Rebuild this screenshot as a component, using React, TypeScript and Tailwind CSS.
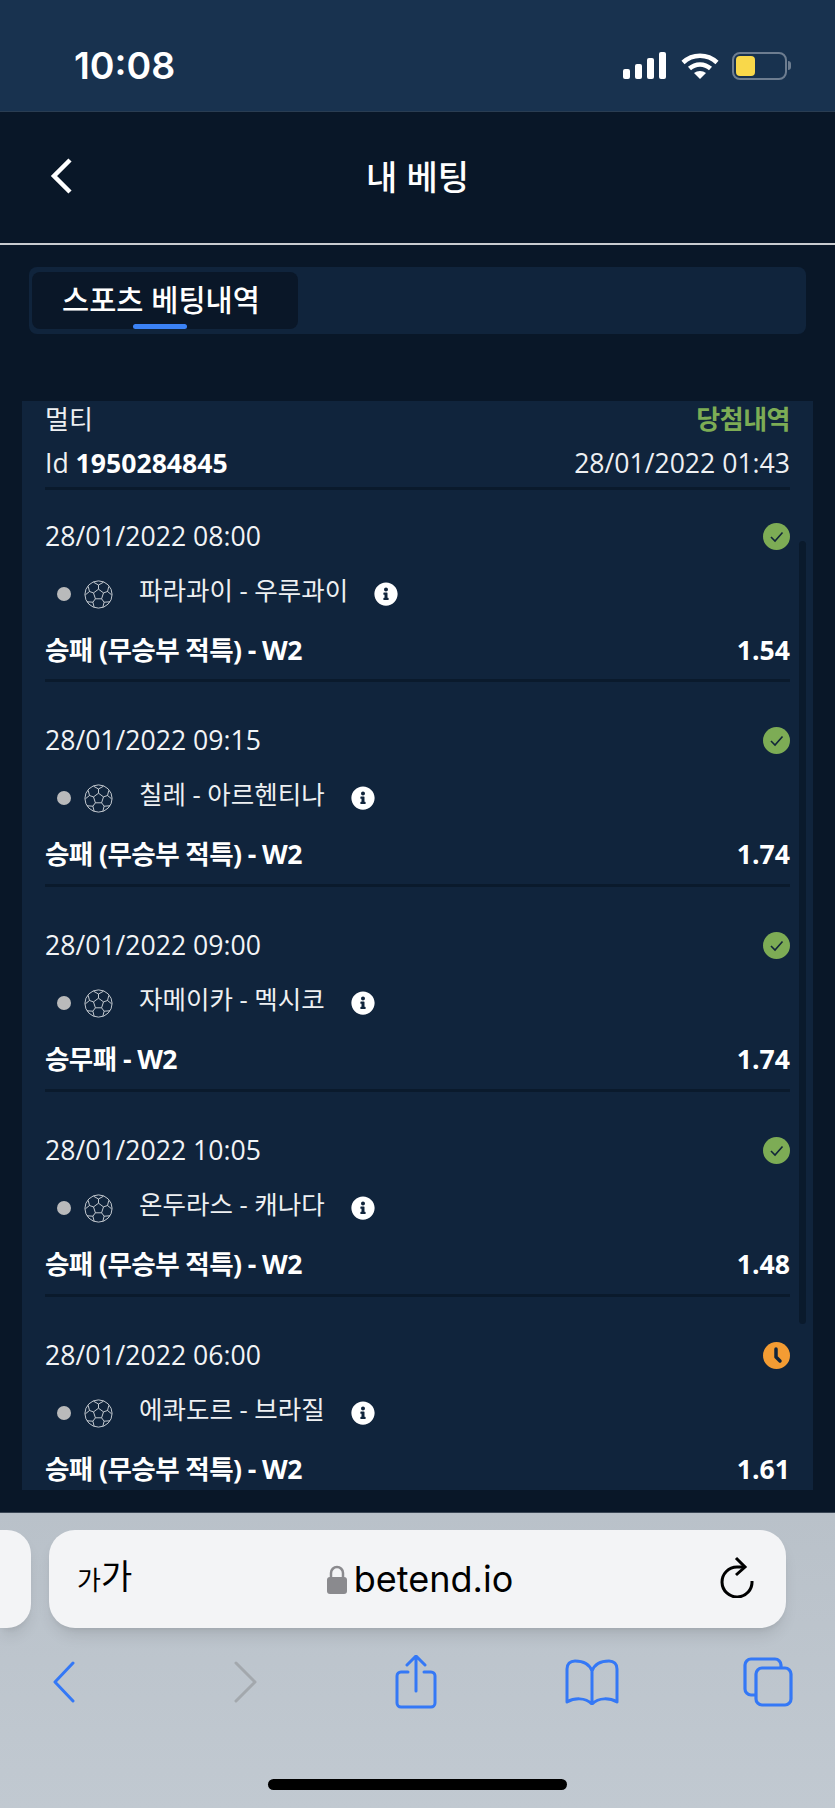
import { FC } from "react";
import { FaInfoCircle } from "react-icons/fa";

interface Bet {
  date: string;
  teams: string;
  market: string;
  odds: string;
  pending?: boolean;
}

const bets: Bet[] = [
  { date: "28/01/2022 08:00", teams: "파라과이 - 우루과이", market: "승패 (무승부 적특) - W2", odds: "1.54" },
  { date: "28/01/2022 09:15", teams: "칠레 - 아르헨티나", market: "승패 (무승부 적특) - W2", odds: "1.74" },
  { date: "28/01/2022 09:00", teams: "자메이카 - 멕시코", market: "승무패 - W2", odds: "1.74" },
  { date: "28/01/2022 10:05", teams: "온두라스 - 캐나다", market: "승패 (무승부 적특) - W2", odds: "1.48" },
  { date: "28/01/2022 06:00", teams: "에콰도르 - 브라질", market: "승패 (무승부 적특) - W2", odds: "1.61", pending: true },
];

const sans = "font-['Open_Sans','Noto_Sans_CJK_KR',sans-serif]";
const ios = "font-['Inter','Noto_Sans_CJK_KR',sans-serif]";

const StatusIcons: FC = () => (
  <div className="flex items-center">
    <svg width="44" height="28" viewBox="0 0 44 28" fill="#fff">
      <rect x="0" y="17" width="7" height="10" rx="2" />
      <rect x="12" y="12" width="7" height="15" rx="2" />
      <rect x="24" y="6" width="7" height="21" rx="2" />
      <rect x="36" y="0" width="7" height="27" rx="2" />
    </svg>
    <svg className="ml-[14px]" width="38" height="28" viewBox="0 0 38 28" fill="none" stroke="#fff" strokeWidth="4.5">
      <path d="M2 10.5C11.5 1.5 26.5 1.5 36 10.5" />
      <path d="M8.5 16.5C14.5 11 23.5 11 29.5 16.5" />
      <path d="M19 27l-6-6c3.4-2.8 8.6-2.8 12 0z" fill="#fff" stroke="none" />
    </svg>
    <div className="ml-[13px] flex items-center">
      <div className="w-[55px] h-[28px] rounded-[8px] border-2 border-[#6d7d90] p-[2px]">
        <div className="w-[19px] h-full rounded-[4px] bg-[#f9d84a]" />
      </div>
      <div className="w-[3px] h-[9px] ml-[1px] rounded-r-full bg-[#6d7d90]" />
    </div>
  </div>
);

// soccer ball outline: centre pentagon, spokes and rim patches
const Ball: FC = () => (
  <svg className="ml-[13px] shrink-0" width="29" height="29" viewBox="0 0 29 29" fill="none" stroke="#d5d9de" strokeWidth="0.9" strokeLinejoin="round">
    <circle cx="14.5" cy="14.5" r="13.6" />
    <path d="M14.5 9.2l5 3.7-1.9 5.9h-6.2l-1.9-5.9z" />
    <path d="M14.5 9.2V5M19.5 12.9l4-1.4M17.6 18.8l2.5 3.4M11.4 18.8l-2.5 3.4M9.5 12.9l-4-1.4" />
    <path d="M9.5 2.2l5 2.8 5-2.8M23.5 11.5l1.3-5M23.5 11.5l4.2 3.4M20.1 22.2l6-0.4M20.1 22.2l-1.2 5M8.9 22.2l1.2 5M8.9 22.2l-6-0.4M5.5 11.5l-4.2 3.4M5.5 11.5L4.2 6.5" />
  </svg>
);

const BetRow: FC<{ bet: Bet; index: number }> = ({ bet, index }) => (
  <div className={`${index === 0 ? "h-[192px] pt-[28px]" : "h-[205px] pt-[40px]"} ${index === bets.length - 1 ? "" : "border-b-[3px] border-[#0a1a2c]"}`}>
    <div className="flex items-center justify-between h-[36px]">
      <span className="text-[26.6px] leading-[36px] text-[#f2f4f6]">{bet.date}</span>
      {bet.pending ? (
        <svg width="27" height="27" viewBox="0 0 27 27">
          <circle cx="13.5" cy="13.5" r="13.5" fill="#f39c33" />
          <path d="M13 7v8l4 4" fill="none" stroke="#10243c" strokeWidth="3.5" strokeLinecap="round" strokeLinejoin="round" />
        </svg>
      ) : (
        <svg width="27" height="27" viewBox="0 0 27 27">
          <circle cx="13.5" cy="13.5" r="13.5" fill="#7dac55" />
          <path d="M8 14l4 4 7.5-8.5" fill="none" stroke="#12263a" strokeWidth="1.6" />
        </svg>
      )}
    </div>
    <div className="flex items-center h-[40px] mt-[20px] pl-[12px]">
      <span className="w-[14px] h-[14px] rounded-full bg-[#b9babb]" />
      <Ball />
      <span className="ml-[26px] text-[25.5px] leading-[36px] -mt-[8px] text-[#eef0f2]">{bet.teams}</span>
      <FaInfoCircle className="ml-[26px] text-white" size={24} />
    </div>
    <div className="flex items-center justify-between h-[36px] mt-[18px] text-[26.6px] leading-[36px] font-bold text-white">
      <span className="tracking-[-0.6px]">{bet.market}</span>
      <span>{bet.odds}</span>
    </div>
  </div>
);

const App: FC = () => {
  return (
    <div className={`relative w-[835px] h-[1808px] flex flex-col overflow-hidden bg-[#091728] ${sans}`}>
      {/* iOS status bar */}
      <div className={`h-[112px] shrink-0 flex items-center justify-between pt-[20px] pl-[74px] pr-[44px] bg-[#18324f] border-b border-[#2a3d52] ${ios}`}>
        <span className="text-[37.5px] font-semibold text-white leading-none">10:08</span>
        <StatusIcons />
      </div>

      {/* page header */}
      <div className="relative h-[133px] shrink-0 flex items-center justify-center border-b-[2px] border-[#c9ccd0]">
        <svg className="absolute left-[50px] top-[46px]" width="22" height="36" viewBox="0 0 22 36" fill="none" stroke="#fff" strokeWidth="4.5">
          <path d="M20 2L4 18l16 16" />
        </svg>
        <h1 className={`text-[34px] font-medium text-white ${ios}`}>내 베팅</h1>
      </div>

      {/* tabs */}
      <div className="mx-[29px] mt-[22px] h-[67px] shrink-0 rounded-[8px] bg-[#10243c] pl-[3px] pt-[5px]">
        <div className="relative w-[266px] h-[57px] rounded-[8px] bg-[#0a1728] flex items-center pl-[30px]">
          <span className={`text-[29.5px] font-medium text-white ${ios}`}>스포츠 베팅내역</span>
          <span className="absolute bottom-0 left-[101px] w-[54px] h-[5px] rounded-full bg-[#3b82f6]" />
        </div>
      </div>

      {/* bet slip */}
      <div className="relative mx-[22px] mt-[67px] h-[1089px] shrink-0 bg-[#10243c] overflow-hidden px-[23px]">
        <div className="flex items-center justify-between h-[44px] text-[26px] leading-[36px] -mt-[4px]">
          <span className="text-[#eef0f2]">멀티</span>
          <span className="font-semibold tracking-[-0.5px] text-[#7dac55]">당첨내역</span>
        </div>
        <div className="flex items-center justify-between mt-[2px] h-[47px] border-b-[3px] border-[#0a1a2c] pb-[3px] text-[26.6px] text-[#eef0f2]">
          <span>
            Id <b className="font-bold text-white">1950284845</b>
          </span>
          <span>28/01/2022 01:43</span>
        </div>
        {bets.map((bet, i) => (
          <BetRow key={bet.date} bet={bet} index={i} />
        ))}
        <div className="absolute left-[777px] top-[140px] w-[7px] h-[783px] rounded-full bg-[#0a1a2c]" />
      </div>

      {/* Safari toolbar */}
      <div className={`absolute left-0 right-0 bottom-0 h-[296px] border-t border-[#3a4655] bg-gradient-to-b from-[#b9c1c9] to-[#c1c9d1] ${ios}`}>
        <div className="flex mt-[17px] h-[98px]">
          <div className="w-[31px] rounded-r-[24px] bg-[#f3f4f6] shadow-lg" />
          <div className="relative flex-1 ml-[18px] mr-[49px] rounded-[26px] bg-[#f3f4f6] shadow-lg flex items-center justify-center text-black">
            <span className="absolute left-[28px] top-[30px] flex items-end leading-none">
              <span className="text-[26px] leading-none">가</span>
              <span className="text-[34px] leading-none">가</span>
            </span>
            <svg className="ml-[5px] mr-[7px]" width="20" height="29" viewBox="0 0 20 29">
              <path d="M4 13V8a6 6 0 0112 0v5" fill="none" stroke="#8a8a8e" strokeWidth="2.5" />
              <rect x="0" y="12" width="20" height="17" rx="3" fill="#8a8a8e" />
            </svg>
            <span className="text-[36px] leading-none">betend.io</span>
            <svg className="absolute right-[30px] top-[26px]" width="36" height="42" viewBox="0 0 36 42" fill="none" stroke="#000" strokeWidth="3">
              <path d="M25 11H17A15 15 0 1 0 32 25" />
              <path d="M16 2l9 9-9 8" />
            </svg>
          </div>
        </div>
        <div className="flex items-center justify-between pl-[53px] pr-[42px] mt-[27px] h-[54px]">
          <svg width="22" height="42" viewBox="0 0 22 42" fill="none" stroke="#3478f6" strokeWidth="3" strokeLinecap="round" strokeLinejoin="round">
            <path d="M20 2L2 21l18 19" />
          </svg>
          <svg className="ml-[48px]" width="24" height="42" viewBox="0 0 24 42" fill="none" stroke="#a3a8ad" strokeWidth="3" strokeLinecap="round" strokeLinejoin="round">
            <path d="M3 2l19 19L3 40" />
          </svg>
          <svg className="ml-[28px]" width="42" height="54" viewBox="0 0 42 54" fill="none" stroke="#3478f6" strokeWidth="3" strokeLinecap="round" strokeLinejoin="round">
            <path d="M13 17H6a4 4 0 00-4 4v27a4 4 0 004 4h30a4 4 0 004-4V21a4 4 0 00-4-4h-7" />
            <path d="M21 36V2M12 10l9-9 9 9" />
          </svg>
          <svg className="ml-[18px]" width="54" height="46" viewBox="0 0 54 46" fill="none" stroke="#3478f6" strokeWidth="3" strokeLinejoin="round">
            <path d="M27 12C24 4 16 2 10 2 5 2 2 5 2 10v33c7-4 18-5 25 2 7-7 18-6 25-2V10c0-5-3-8-8-8-6 0-14 2-17 10zM27 12v33" />
          </svg>
          <svg className="ml-[14px]" width="50" height="50" viewBox="0 0 50 50" fill="none" stroke="#3478f6" strokeWidth="3.2">
            <path d="M38 11V8a6 6 0 00-6-6H8a6 6 0 00-6 6v24a6 6 0 006 6h5" />
            <rect x="13" y="11" width="35" height="37" rx="6" />
          </svg>
        </div>
        <div className="absolute left-[268px] bottom-[18px] w-[299px] h-[11px] rounded-full bg-black" />
      </div>
    </div>
  );
};

export default App;
